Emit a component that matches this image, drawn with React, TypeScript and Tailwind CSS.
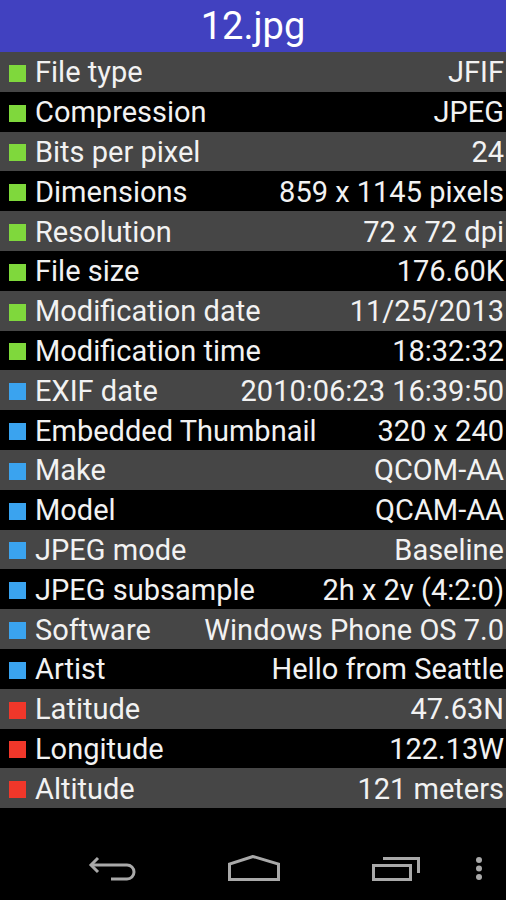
import React from "react";

type Row = { label: string; value: string; color: string };

const GREEN = "#7fd83c";
const BLUE = "#3aa3ef";
const RED = "#f0372a";

const rows: Row[] = [
  { label: "File type", value: "JFIF", color: GREEN },
  { label: "Compression", value: "JPEG", color: GREEN },
  { label: "Bits per pixel", value: "24", color: GREEN },
  { label: "Dimensions", value: "859 x 1145 pixels", color: GREEN },
  { label: "Resolution", value: "72 x 72 dpi", color: GREEN },
  { label: "File size", value: "176.60K", color: GREEN },
  { label: "Modification date", value: "11/25/2013", color: GREEN },
  { label: "Modification time", value: "18:32:32", color: GREEN },
  { label: "EXIF date", value: "2010:06:23 16:39:50", color: BLUE },
  { label: "Embedded Thumbnail", value: "320 x 240", color: BLUE },
  { label: "Make", value: "QCOM-AA", color: BLUE },
  { label: "Model", value: "QCAM-AA", color: BLUE },
  { label: "JPEG mode", value: "Baseline", color: BLUE },
  { label: "JPEG subsample", value: "2h x 2v (4:2:0)", color: BLUE },
  { label: "Software", value: "Windows Phone OS 7.0", color: BLUE },
  { label: "Artist", value: "Hello from Seattle", color: BLUE },
  { label: "Latitude", value: "47.63N", color: RED },
  { label: "Longitude", value: "122.13W", color: RED },
  { label: "Altitude", value: "121 meters", color: RED },
];

function InfoRow({ row, odd }: { row: Row; odd: boolean }) {
  return (
    <div
      className={
        "flex h-[39.8px] items-center text-[29px] leading-none text-[#f2f2f2] " +
        (odd ? "bg-black" : "bg-[#464646]")
      }
    >
      <span
        className="ml-[9px] mt-[3px] h-[17px] w-[17px] shrink-0"
        style={{ backgroundColor: row.color }}
      />
      <span className="ml-[9px] mt-[2px] whitespace-nowrap">{row.label}</span>
      <span className="ml-auto mt-[2px] whitespace-nowrap pr-[2px]">{row.value}</span>
    </div>
  );
}

export default function App() {
  return (
    <div
      className="flex h-[900px] w-[506px] flex-col bg-black"
      style={{ fontFamily: "Roboto, 'Liberation Sans', sans-serif" }}
    >
      <div className="flex h-[52px] items-center justify-center bg-[#4141c0] text-[38px] leading-none text-white">
        12.jpg
      </div>

      {rows.map((r, i) => (
        <InfoRow key={r.label} row={r} odd={i % 2 === 1} />
      ))}

      {/* android nav bar */}
      <div className="flex flex-1 items-start pl-[88px] pt-[45px]">
        <svg width="50" height="30" viewBox="0 0 50 30" fill="none" stroke="#a9a9a9" strokeWidth="3">
          <path d="M10 5 L3 12 L10 19" strokeLinejoin="miter" />
          <path d="M3 12 H39 A7 7 0 0 1 39 26 H23" />
        </svg>
        <svg className="ml-[88px]" width="56" height="30" viewBox="0 0 56 30" fill="none" stroke="#a9a9a9" strokeWidth="3">
          <path d="M27 3.5 L3.5 11 V26.5 H52.5 V11 Z" strokeLinejoin="miter" />
        </svg>
        <svg className="ml-[88px]" width="52" height="30" viewBox="0 0 52 30" fill="none" stroke="#a9a9a9" strokeWidth="3">
          <rect x="3.5" y="12.5" width="37" height="14" />
          <path d="M13 5.5 H48.5 V20" />
        </svg>
        <svg className="ml-[52px]" width="10" height="30" viewBox="0 0 10 30" fill="#a9a9a9">
          <circle cx="5" cy="7" r="3" />
          <circle cx="5" cy="15.5" r="3" />
          <circle cx="5" cy="24" r="3" />
        </svg>
      </div>
    </div>
  );
}
